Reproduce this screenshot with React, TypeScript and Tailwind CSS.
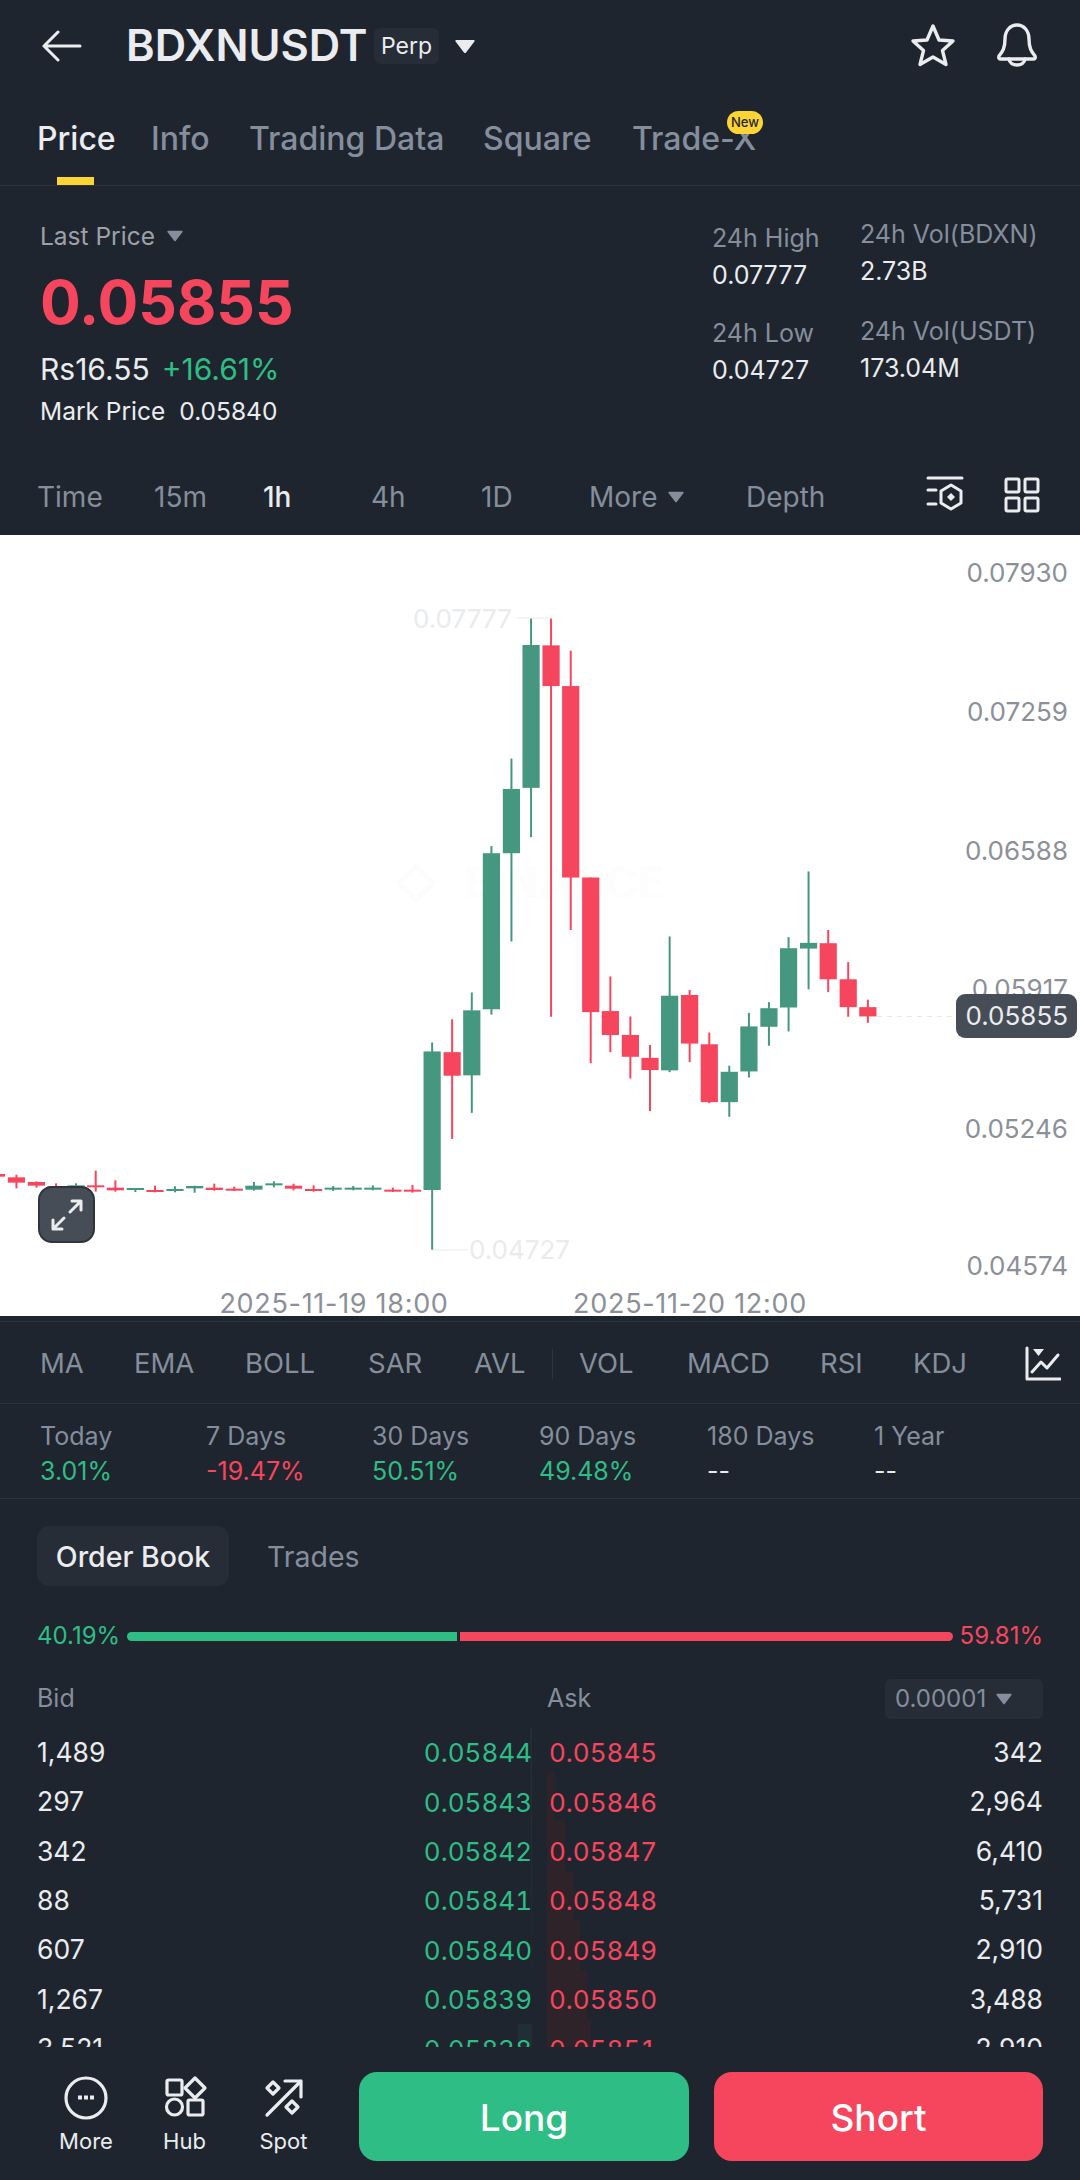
import React from "react";

const GREEN = "#46977f";
const RED = "#f6465d";

// big candles, measured from the chart: [x, isUp, wickTop, wickBottom, bodyTop, bodyBottom]
const bigCandles: [number, boolean, number, number, number, number][] = [
  [146, true, 1295, 1875, 1320, 1708],
  [202, false, 1230, 1565, 1322, 1388],
  [257, true, 1155, 1492, 1205, 1387],
  [312, true, 745, 1217, 765, 1202],
  [368, true, 500, 1012, 585, 765],
  [423, true, 108, 720, 182, 582],
  [479, false, 108, 1223, 183, 297],
  [534, false, 198, 980, 297, 833],
  [590, false, 833, 1353, 833, 1210],
  [645, false, 1110, 1322, 1207, 1274],
  [701, false, 1222, 1396, 1274, 1335],
  [756, false, 1302, 1487, 1338, 1372],
  [811, true, 998, 1378, 1164, 1373],
  [867, false, 1148, 1350, 1162, 1298],
  [922, false, 1267, 1465, 1300, 1462],
  [978, true, 1360, 1503, 1377, 1462],
  [1033, true, 1212, 1393, 1250, 1376],
  [1089, true, 1182, 1304, 1199, 1251],
  [1144, true, 1000, 1264, 1031, 1197],
  [1200, true, 816, 1146, 1016, 1032],
  [1255, false, 980, 1154, 1017, 1118],
  [1311, false, 1070, 1223, 1118, 1196],
  [1366, false, 1175, 1240, 1196, 1222],
];

// flat candles on the left of the chart
const smallCandles: [number, boolean, number, number, number, number][] = [
  [-10, false, 458, 474, 462, 470],
  [46, false, 464, 505, 472, 488],
  [102, false, 484, 503, 486, 497],
  [157, false, 490, 512, 498, 502],
  [213, true, 490, 515, 496, 502],
  [268, false, 452, 515, 496, 502],
  [323, false, 481, 515, 503, 511],
  [379, true, 504, 516, 504, 509],
  [434, false, 497, 517, 510, 516],
  [490, true, 499, 517, 507, 513],
  [545, true, 497, 518, 498, 505],
  [600, false, 491, 512, 503, 510],
  [656, false, 500, 513, 506, 511],
  [711, true, 486, 512, 497, 509],
  [767, true, 484, 502, 490, 496],
  [822, false, 491, 511, 497, 506],
  [878, false, 496, 515, 507, 513],
  [933, true, 498, 513, 503, 509],
  [989, true, 498, 511, 503, 507],
  [1044, true, 496, 511, 503, 507],
  [1100, false, 503, 516, 509, 513],
  [1155, false, 495, 518, 509, 514],
];

const axisLabels = [
  ["0.07930", 573],
  ["0.07259", 712],
  ["0.06588", 851],
  ["0.05917", 989],
  ["0.05246", 1129],
  ["0.04574", 1266],
] as const;

const orderRows = [
  ["1,489", "0.05844", "0.05845", "342"],
  ["297", "0.05843", "0.05846", "2,964"],
  ["342", "0.05842", "0.05847", "6,410"],
  ["88", "0.05841", "0.05848", "5,731"],
  ["607", "0.05840", "0.05849", "2,910"],
  ["1,267", "0.05839", "0.05850", "3,488"],
  ["3,521", "0.05838", "0.05851", "2,910"],
];

function Candle({ x, up, wt, wb, bt, bb }: { x: number; up: boolean; wt: number; wb: number; bt: number; bb: number }) {
  const c = up ? GREEN : RED;
  return (
    <>
      <rect x={x - 1} y={wt} width={2} height={wb - wt} fill={c} />
      <rect x={x - 8.6} y={bt} width={17.2} height={Math.max(bb - bt, 2)} fill={c} />
    </>
  );
}

function Chart() {
  return (
    <svg className="absolute inset-0" width={1080} height={781} viewBox="0 535 1080 781" fontFamily="Inter, sans-serif">
      <path d="M416 866l17 17-17 17-17-17z" fill="none" stroke="#fcfcfc" strokeWidth={5} />
      <text x={464} y={898} fontSize={44} fontWeight={700} fill="#fdfdfd">BINANCE</text>
      {axisLabels.map(([label, y]) => (
        <text key={label} x={1068} y={y + 9} textAnchor="end" fontSize={26} fill="#8b9098">{label}</text>
      ))}
      <text x={334} y={1313} textAnchor="middle" fontSize={27} letterSpacing={0.7} fill="#8b9098">2025-11-19 18:00</text>
      <text x={690} y={1313} textAnchor="middle" fontSize={27} letterSpacing={0.7} fill="#8b9098">2025-11-20 12:00</text>
      <text x={413} y={628} fontSize={26} fill="#e9ebed">0.07777</text>
      <line x1={516} y1={618} x2={551} y2={618} stroke="#e9ebed" strokeWidth={1} />
      <text x={469} y={1259} fontSize={26} fill="#e9ebed">0.04727</text>
      <line x1={432} y1={1250} x2={468} y2={1250} stroke="#e9ebed" strokeWidth={1} />
      <line x1={877} y1={1016.5} x2={956} y2={1016.5} stroke="#e4e6e8" strokeWidth={1} strokeDasharray="5 5" />
      {smallCandles.map(([x, up, wt, wb, bt, bb], i) => (
        <Candle key={i} x={x / 2.8} up={up} wt={1020 + wt / 3} wb={1020 + wb / 3} bt={1020 + bt / 3} bb={1020 + bb / 3} />
      ))}
      {bigCandles.map(([x, up, wt, wb, bt, bb], i) => (
        <Candle key={i} x={380 + x / 2.8} up={up} wt={580 + wt / 2.8} wb={580 + wb / 2.8} bt={580 + bt / 2.8} bb={580 + bb / 2.8} />
      ))}
      <rect x={956} y={994} width={121} height={44} rx={9} fill="#474d57" />
      <text x={1068} y={1025} textAnchor="end" fontSize={26} fill="#eaecef">0.05855</text>
    </svg>
  );
}

function Caret({ className }: { className: string }) {
  return (
    <svg className={className} viewBox="0 0 20 14" fill="currentColor">
      <path d="M2 1h16q1.500 0 .8 1.300L11 12.500q-1 1.200-2 0L1.200 2.300Q.5 1 2 1z" />
    </svg>
  );
}

export default function App() {
  return (
    <div className="flex h-[2180px] w-[1080px] flex-col overflow-hidden bg-[#1f252e] font-['Inter',sans-serif] text-[#eaecef]">
      {/* top bar */}
      <div className="flex h-[92px] items-center pl-[42px] pr-[40px]">
        <svg className="h-[34px] w-[40px]" viewBox="0 0 40 34" fill="none" stroke="#eaecef" strokeWidth="3" strokeLinecap="round" strokeLinejoin="round">
          <path d="M2 17h36M16 3 2 17l14 14" />
        </svg>
        <span className="ml-[44px] w-[237px] whitespace-nowrap text-[43.5px] font-semibold leading-none">BDXNUSDT</span>
        <span className="ml-[11px] flex h-[36px] w-[65px] items-center justify-center rounded-md bg-[#272d37] text-[23px]">Perp</span>
        <Caret className="ml-[15px] h-[15px] w-[22px] text-[#eaecef]" />
        <svg className="ml-auto h-[46px] w-[46px]" viewBox="0 0 46 46" fill="none" stroke="#eaecef" strokeWidth="3.400" strokeLinejoin="round">
          <polygon points="23,3 29,17 43,18 32.500,27.500 36,41.500 23,34 10,41.500 13.500,27.500 3,18 17,17" />
        </svg>
        <svg className="ml-[38px] h-[46px] w-[46px]" viewBox="0 0 46 46" fill="none" stroke="#eaecef" strokeWidth="3.400" strokeLinejoin="round" strokeLinecap="round">
          <path d="M5 33 C8 29 11 26 11 16 C11 8 16 2 23 2 C30 2 35 8 35 16 C35 26 38 29 41 33 Q42 36 39 36 H7 Q4 36 5 33Z" />
          <path d="M15 36 C16 44 30 44 31 36" />
        </svg>
      </div>

      {/* tabs */}
      <div className="grid h-[94px] grid-cols-[114px_98px_234px_149px_1fr] border-b border-[#2e343d] pl-[37px] text-[32px] font-medium leading-[36px]">
        <div className="relative pt-[29px]">
          Price
          <div className="absolute bottom-0 left-[20px] h-[8px] w-[37px] bg-[#fcd535]" />
        </div>
        {["Info", "Trading Data", "Square"].map((t) => (
          <div key={t} className="pt-[29px] text-[#848e9c]">{t}</div>
        ))}
        <div className="relative pt-[29px] text-[#848e9c]">
          Trade-X
          <div className="absolute left-[95px] top-[19px] flex h-[23px] w-[36px] items-center justify-center rounded-full bg-[#fcd535] text-[13px] leading-none text-[#1f252e]">New</div>
        </div>
      </div>

      {/* last price and 24h stats */}
      <div className="flex h-[269px] justify-between pl-[40px] pr-[40px] pt-[38px]">
        <div>
          <div className="flex items-center gap-[11px] text-[24.5px] leading-[24px] text-[#9ba1a9]">
            Last Price
            <Caret className="h-[12px] w-[18px] text-[#848e9c]" />
          </div>
          <div className="mt-[20px] text-[60.5px] font-bold leading-[68px] text-[#f6465d]">0.05855</div>
          <div className="mt-[18px] flex gap-[12px] text-[30px] leading-[30px]">
            <span>Rs16.55</span>
            <span className="text-[#2ebd85]">+16.61%</span>
          </div>
          <div className="mt-[13px] flex gap-[14px] text-[24.5px] leading-[28px]">
            <span>Mark Price</span>
            <span>0.05840</span>
          </div>
        </div>
        <div className="flex gap-[40px] whitespace-nowrap text-[25px]">
          <div className="w-[108px]">
            <div className="leading-[28px] text-[#848e9c]">24h High</div>
            <div className="mt-[9px] leading-[28px]">0.07777</div>
            <div className="mt-[30px] leading-[28px] text-[#848e9c]">24h Low</div>
            <div className="mt-[9px] leading-[28px]">0.04727</div>
          </div>
          <div className="w-[180px] -translate-y-[4px]">
            <div className="leading-[28px] text-[#848e9c]">24h Vol(BDXN)</div>
            <div className="mt-[9px] leading-[28px]">2.73B</div>
            <div className="mt-[32px] leading-[28px] text-[#848e9c]">24h Vol(USDT)</div>
            <div className="mt-[9px] leading-[28px]">173.04M</div>
          </div>
        </div>
      </div>

      {/* interval row */}
      <div className="grid h-[80px] grid-cols-[117px_109px_108px_110px_108px_157px_1fr] items-center pl-[37px] pr-[40px] text-[28px] text-[#848e9c]">
        <span className="pt-[3px]">Time</span>
        <span className="pt-[3px]">15m</span>
        <span className="pt-[3px] font-medium text-[#eaecef]">1h</span>
        <span className="pt-[3px]">4h</span>
        <span className="pt-[3px]">1D</span>
        <span className="flex items-center gap-[10px] pt-[3px]">More<Caret className="h-[12px] w-[18px] text-[#848e9c]" /></span>
        <div className="flex items-center">
          <span className="pt-[3px]">Depth</span>
          <svg className="ml-auto h-[42px] w-[38px]" viewBox="0 0 38 42" fill="none" stroke="#eaecef" strokeWidth="3" strokeLinecap="round" strokeLinejoin="round">
            <path d="M2 4h34M2 16h8M2 30h8" />
            <path d="M25 11l10 6v12l-10 6-10-6V17z" />
            <path d="M25 19l4 4-4 4-4-4z" fill="#eaecef" stroke="none" />
          </svg>
          <svg className="ml-[40px] h-[36px] w-[36px]" viewBox="0 0 36 36" fill="none" stroke="#eaecef" strokeWidth="3" strokeLinejoin="round">
            <rect x="2" y="2" width="13" height="13" rx="1.500" />
            <rect x="21" y="2" width="13" height="13" rx="1.500" />
            <rect x="2" y="21" width="13" height="13" rx="1.500" />
            <rect x="21" y="21" width="13" height="13" rx="1.500" />
          </svg>
        </div>
      </div>

      {/* chart */}
      <div className="relative h-[781px] shrink-0 overflow-hidden bg-white">
        <Chart />
        <button className="absolute left-[38px] top-[651px] flex h-[57px] w-[57px] items-center justify-center rounded-[14px] border-2 border-[#30353c] bg-[#474d57]">
          <svg className="h-[36px] w-[36px]" viewBox="0 0 36 36" fill="none" stroke="#eaecef" strokeWidth="3" strokeLinecap="round" strokeLinejoin="round">
            <path d="M21 15 32 4M23 4h9v9M15 21 4 32M13 32H4v-9" />
          </svg>
        </button>
      </div>

      {/* indicators */}
      <div className="mt-[5px] grid h-[83px] shrink-0 grid-cols-[94px_111px_123px_106px_78px_27px_108px_133px_93px_112px_1fr] items-center border-y border-[#2e343d] pl-[40px] pr-[20px] pt-[2px] text-[27.5px] text-[#848e9c]">
        <span>MA</span>
        <span>EMA</span>
        <span>BOLL</span>
        <span>SAR</span>
        <span>AVL</span>
        <span className="h-[30px] w-px bg-[#2e343d]" />
        <span>VOL</span>
        <span>MACD</span>
        <span>RSI</span>
        <span>KDJ</span>
        <svg className="h-[36px] w-[36px]" viewBox="0 0 36 36" fill="none" stroke="#eaecef" strokeWidth="3" strokeLinecap="round" strokeLinejoin="round">
          <path d="M2 2v31h33" />
          <path d="M7 26l9-10 6 6 11-13" />
          <path d="M8 3h11l-5.500 7z" fill="#eaecef" stroke="none" />
        </svg>
      </div>

      {/* period change */}
      <div className="grid h-[95px] shrink-0 grid-cols-[166px_166px_167px_168px_167px_1fr] border-b border-[#2e343d] pl-[40px] pt-[16px] text-[25px] leading-[32px]">
        {[
          ["Today", "3.01%", "text-[#2ebd85]"],
          ["7 Days", "-19.47%", "text-[#f6465d]"],
          ["30 Days", "50.51%", "text-[#2ebd85]"],
          ["90 Days", "49.48%", "text-[#2ebd85]"],
          ["180 Days", "--", "text-[#eaecef]"],
          ["1 Year", "--", "text-[#eaecef]"],
        ].map(([label, value, color]) => (
          <div key={label}>
            <div className="text-[#848e9c]">{label}</div>
            <div className={`mt-[3px] ${color}`}>{value}</div>
          </div>
        ))}
      </div>

      {/* order book */}
      <div className="flex shrink-0 items-center pl-[37px] pt-[27px] text-[28.5px]">
        <div className="flex h-[60px] w-[192px] items-center justify-center rounded-[12px] bg-[#272d37] pt-[3px] font-medium">Order Book</div>
        <div className="ml-[38px] pt-[3px] text-[#848e9c]">Trades</div>
      </div>
      <div className="mt-[35px] flex h-[30px] shrink-0 items-center pl-[37px] pr-[37px] text-[24px]">
        <span className="w-[90px] text-[#2ebd85]">40.19%</span>
        <div className="h-[9px] w-[330px] rounded-l-full bg-[#2ebd85]" />
        <div className="ml-[3px] h-[9px] w-[493px] rounded-r-full bg-[#f6465d]" />
        <span className="ml-auto text-[#f6465d]">59.81%</span>
      </div>
      <div className="mt-[28px] flex h-[40px] shrink-0 items-center pl-[37px] pr-[37px] text-[25px] text-[#848e9c]">
        <span className="w-[510px]">Bid</span>
        <span>Ask</span>
        <span className="ml-auto flex h-[40px] w-[158px] items-center gap-[9px] rounded-md bg-[#272d37] pl-[10px] text-[24px]">
          0.00001
          <Caret className="h-[12px] w-[18px] text-[#848e9c]" />
        </span>
      </div>
      <div className="relative mt-[9px] min-h-0 flex-1 overflow-hidden px-[37px] text-[26.5px]">
        <svg className="absolute left-[500px] top-0 h-[320px] w-[120px]" viewBox="500 1728 120 320" fill="#2d2329">
          <path d="M547 1773h7v47h11v52h9v48h6v50h7v50h4v30h-44z" />
          <path d="M530 1724h2v300h-14v24h14v-40z" fill="#212e33" />
        </svg>
        {orderRows.map(([bid, bidPrice, askPrice, ask]) => (
          <div key={bidPrice} className="relative flex h-[49.4px] items-center">
            <span className="w-[230px]">{bid}</span>
            <span className="w-[265px] text-right text-[26px] tabular-nums text-[#2ebd85]">{bidPrice}</span>
            <span className="ml-[17px] text-[26px] tabular-nums text-[#f6465d]">{askPrice}</span>
            <span className="ml-auto">{ask}</span>
          </div>
        ))}
      </div>

      {/* bottom actions */}
      <div className="flex h-[133px] shrink-0 pl-[37px] pr-[37px] pt-[25px]">
        <div className="flex w-[322px] pt-[3px] text-[22px]">
          <div className="flex w-[98px] flex-col items-center">
            <svg className="h-[46px] w-[46px]" viewBox="0 0 46 46" fill="none" stroke="#eaecef" strokeWidth="3.200">
              <circle cx="23" cy="23" r="20" />
              <path d="M15 20.500h4v4h-4zM21 20.500h4v4h-4zM27 20.500h4v4h-4z" fill="#eaecef" stroke="none" />
            </svg>
            <span className="mt-[7px] leading-[26px]">More</span>
          </div>
          <div className="flex w-[99px] flex-col items-center">
            <svg className="h-[46px] w-[46px]" viewBox="0 0 46 46" fill="none" stroke="#eaecef" strokeWidth="3.200" strokeLinejoin="round">
              <rect x="5" y="5" width="15" height="15" rx="1.500" />
              <path d="M33 3l10 10-10 10-10-10z" />
              <circle cx="12.500" cy="32" r="8" />
              <rect x="26" y="25" width="15" height="15" rx="1.500" />
            </svg>
            <span className="mt-[7px] leading-[26px]">Hub</span>
          </div>
          <div className="flex w-[99px] flex-col items-center">
            <svg className="h-[46px] w-[46px]" viewBox="0 0 46 46" fill="none" stroke="#eaecef" strokeWidth="3.200" strokeLinejoin="round" strokeLinecap="round">
              <path d="M6 40 40 6M24 6h16v16" />
              <path d="M12 7l6 6-6 6-6-6z" />
              <path d="M31 26l6 6-6 6-6-6z" />
            </svg>
            <span className="mt-[7px] leading-[26px]">Spot</span>
          </div>
        </div>
        <div className="flex h-[89px] w-[330px] items-center justify-center rounded-[18px] bg-[#2ebd85] pt-[2px] text-[37px] font-medium text-white">Long</div>
        <div className="ml-[25px] flex h-[89px] w-[329px] items-center justify-center rounded-[18px] bg-[#f6465d] pt-[2px] text-[37px] font-medium text-white">Short</div>
      </div>
    </div>
  );
}
